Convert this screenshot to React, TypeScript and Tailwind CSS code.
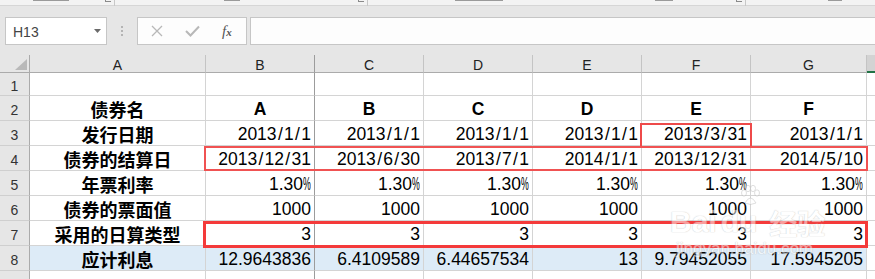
import React from "react";

const COLS = "grid grid-cols-[30px_176px_109px_109px_109px_109px_109px_116px_1fr]";
const LETTERS = ["A", "B", "C", "D", "E", "F", "G"];

const rows: { label: string; vals: string[]; bold?: boolean; blue?: boolean }[] = [
  { label: "债券名", vals: ["A", "B", "C", "D", "E", "F"], bold: true },
  { label: "发行日期", vals: ["2013/1/1", "2013/1/1", "2013/1/1", "2013/1/1", "2013/3/31", "2013/1/1"] },
  { label: "债券的结算日", vals: ["2013/12/31", "2013/6/30", "2013/7/1", "2014/1/1", "2013/12/31", "2014/5/10"] },
  { label: "年票利率", vals: ["1.30%", "1.30%", "1.30%", "1.30%", "1.30%", "1.30%"] },
  { label: "债券的票面值", vals: ["1000", "1000", "1000", "1000", "1000", "1000"] },
  { label: "采用的日算类型", vals: ["3", "3", "3", "3", "3", "3"] },
  { label: "应计利息", vals: ["12.9643836", "6.4109589", "6.44657534", "13", "9.79452055", "17.5945205"], blue: true },
];

function Val({ v }: { v: string }) {
  if (v.endsWith("%")) {
    return (
      <span>
        {v.slice(0, -1)}
        <span className="inline-block w-[8px] origin-left scale-x-50">%</span>
      </span>
    );
  }
  if (v.includes("/")) {
    const parts = v.split("/");
    return (
      <span>
        {parts.map((p, i) => (
          <React.Fragment key={i}>
            {i > 0 && <span className="px-[1.3px]">/</span>}
            {p}
          </React.Fragment>
        ))}
      </span>
    );
  }
  return <span>{v}</span>;
}

function RowHeader({ n, h }: { n: number; h: string }) {
  return (
    <div
      className={`${h} bg-[#e6e6e6] border-r border-b border-r-[#ababab] border-b-[#cfcfcf] flex items-center justify-center text-[14px] text-[#333] leading-none pt-[3px]`}
    >
      {n}
    </div>
  );
}

export default function App() {
  return (
    <div className="relative w-[875px] h-[279px] overflow-hidden bg-[#e6e6e6] font-['Liberation_Sans','Noto_Sans_CJK_SC',sans-serif] text-black">
      {/* ribbon remnant */}
      <div className="h-[6px] bg-[#f3f3f3] border-b border-[#d6d6d6] flex items-start">
        <div className="ml-[33px] mt-0 h-[1px] w-[36px] bg-[#9a9a9a]" />
        <div className="ml-[36px] mt-0 h-[2px] w-[6px] border-l border-b border-[#8a8a8a]" />
        <div className="ml-[3px] h-[6px] w-[1px] bg-[#c8c8c8]" />
        <div className="ml-[109px] h-[1px] w-[16px] bg-[#9a9a9a]" />
        <div className="ml-[118px] h-[2px] w-[6px] border-l border-b border-[#8a8a8a]" />
        <div className="ml-[3px] h-[6px] w-[1px] bg-[#c8c8c8]" />
        <div className="ml-[87px] h-[1px] w-[48px] bg-[#9a9a9a]" />
        <div className="ml-[152px] h-[1px] w-[18px] bg-[#9a9a9a]" />
        <div className="ml-[63px] h-[2px] w-[6px] border-l border-b border-[#8a8a8a]" />
        <div className="ml-[3px] h-[6px] w-[1px] bg-[#c8c8c8]" />
        <div className="ml-[82px] h-[1px] w-[14px] bg-[#9a9a9a]" />
      </div>

      {/* formula bar */}
      <div className="pt-[11px] pb-[10px] flex">
        <div className="ml-[5px] w-[102px] h-[28px] bg-white border border-[#c6c6c6] flex items-center justify-between pl-[7px] pr-[5px]">
          <span className="text-[14px] text-[#444] leading-none pt-[1px]">H13</span>
          <svg width="7" height="4" viewBox="0 0 7 4">
            <path d="M0 0 L7 0 L3.5 4 Z" fill="#6a6a6a" />
          </svg>
        </div>
        <div className="w-[30px] flex flex-col items-center justify-center gap-[2px]">
          <div className="w-[2px] h-[2px] bg-[#b4b4b4]" />
          <div className="w-[2px] h-[2px] bg-[#b4b4b4]" />
          <div className="w-[2px] h-[2px] bg-[#b4b4b4]" />
        </div>
        <div className="w-[110px] h-[28px] bg-[#fdfdfd] border border-[#c6c6c6] flex items-center">
          <svg className="ml-[13px]" width="12" height="12" viewBox="0 0 12 12">
            <path d="M1 1 L11 11 M11 1 L1 11" stroke="#b8b8b8" strokeWidth="1.3" />
          </svg>
          <svg className="ml-[22px]" width="15" height="12" viewBox="0 0 15 12">
            <path d="M1 6 L5.5 10.5 L14 1.5" stroke="#b8b8b8" strokeWidth="2" fill="none" />
          </svg>
          <span className="ml-[22px] font-['Liberation_Serif',serif] italic text-[15px] text-[#555] leading-none">
            f<span className="text-[11px] font-bold">x</span>
          </span>
        </div>
        <div className="ml-[3px] flex-1 h-[28px] bg-[#fdfdfd] border border-r-0 border-[#c6c6c6]" />
      </div>

      {/* grid */}
      <div className="relative">
        <div className={COLS}>
          {/* column headers */}
          <div className="h-[18px] bg-[#e6e6e6] border-r border-b border-r-[#ababab] border-b-[#ababab] flex items-end justify-end pr-[2px] pb-[2px]">
            <svg width="12" height="11" viewBox="0 0 12 11">
              <path d="M12 0 L12 11 L0 11 Z" fill="#b9b9b9" />
            </svg>
          </div>
          {LETTERS.map((l) => (
            <div
              key={l}
              className={`h-[18px] bg-[#e6e6e6] border-r border-b border-b-[#ababab] ${
                l === "B" ? "border-r-[#9c9c9c]" : "border-r-[#c4c4c4]"
              } flex items-center justify-center text-[14px] text-[#222] leading-none pt-[3px]`}
            >
              {l}
            </div>
          ))}
          <div className="h-[18px] bg-[#d3d3d3] border-b-2 border-[#217346]" />

          {/* row 1 */}
          <RowHeader n={1} h="h-[23px]" />
          {LETTERS.map((l) => (
            <div
              key={"r1" + l}
              className={`h-[23px] bg-white border-r border-b border-b-[#d4d4d4] ${
                l === "B" ? "border-r-[#9c9c9c]" : "border-r-[#d4d4d4]"
              }`}
            />
          ))}
          <div className="h-[23px] bg-white border-b border-[#d4d4d4]" />

          {rows.map((r, i) => (
            <React.Fragment key={r.label}>
              <RowHeader n={i + 2} h="h-[25px]" />
              <div
                className={`h-[25px] ${r.blue ? "bg-[#ddebf7]" : "bg-white"} border-r border-b border-[#d4d4d4] flex items-end justify-center pb-[2px] leading-none font-['Noto_Sans_CJK_SC',sans-serif] font-bold text-[18px]`}
              >
                {r.label}
              </div>
              {r.vals.map((v, j) => (
                <div
                  key={j}
                  className={`h-[25px] ${r.blue ? "bg-[#ddebf7]" : "bg-white"} border-r border-b border-b-[#d4d4d4] ${
                    j === 0 ? "border-r-[#9c9c9c]" : "border-r-[#d4d4d4]"
                  } flex items-end ${r.bold ? "justify-center font-bold" : "justify-end pr-[3px]"} pb-[2px] leading-none text-[17.5px]`}
                >
                  <Val v={v} />
                </div>
              ))}
              <div className="h-[25px] bg-white border-b border-[#d4d4d4]" />
            </React.Fragment>
          ))}

          {/* row 9 (partial) */}
          <RowHeader n={9} h="h-[25px]" />
          {LETTERS.map((l) => (
            <div
              key={"r9" + l}
              className={`h-[25px] bg-white border-r ${l === "B" ? "border-r-[#9c9c9c]" : "border-r-[#d4d4d4]"}`}
            />
          ))}
          <div className="h-[25px] bg-white" />
        </div>

        {/* red annotation boxes */}
        <div className="absolute left-[640px] top-[68px] w-[112px] h-[25px] border-2 border-[#ee4a4a]" />
        <div className="absolute left-[204px] top-[91px] w-[664px] h-[25px] border-2 border-[#f05252]" />
        <div className="absolute left-[203px] top-[166px] w-[665px] h-[27px] border-[3px] border-[#f43a3a]" />

        {/* watermark */}
        <div className="absolute left-[670px] top-[152px] pointer-events-none select-none opacity-50">
          <div className="flex items-end gap-[4px] font-['Liberation_Sans',sans-serif] font-bold text-[30px] leading-none text-white [text-shadow:0_0_1px_#a8a8a8,0_0_1px_#a8a8a8]">
            <span>Bai</span>
            <span className="relative">
              du
              <svg className="absolute left-[18px] top-[-22px]" width="22" height="22" viewBox="0 0 22 22">
                <g fill="white" stroke="#b0b0b0" strokeWidth="0.8">
                  <ellipse cx="5" cy="8" rx="2.5" ry="3.2" />
                  <ellipse cx="9" cy="3.5" rx="2.5" ry="3.2" />
                  <ellipse cx="14" cy="3.5" rx="2.5" ry="3.2" />
                  <ellipse cx="18" cy="8" rx="2.5" ry="3.2" />
                  <path d="M6 18 Q11.5 8 17 18 Q11.5 21 6 18 Z" />
                </g>
              </svg>
            </span>
            <span className="ml-[8px] font-['Noto_Sans_CJK_SC',sans-serif] text-[28px]">经验</span>
          </div>
          <div className="mt-[3px] ml-[6px] font-['Liberation_Sans',sans-serif] text-[17px] leading-none text-white [text-shadow:0_0_1px_#a8a8a8,0_0_1px_#a8a8a8]">
            jingyan.baidu.com
          </div>
        </div>
      </div>
    </div>
  );
}
